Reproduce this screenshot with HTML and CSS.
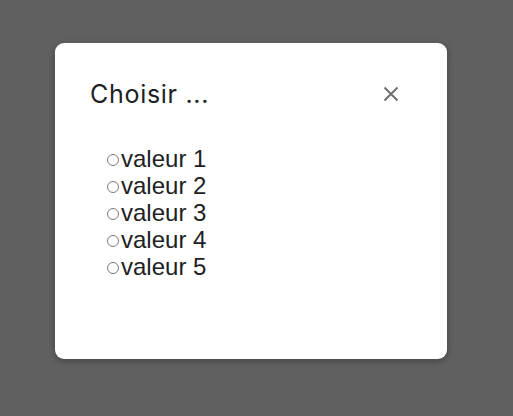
FILE: index.html
```html
<!DOCTYPE html>
<html lang="fr">
<head>
<meta charset="utf-8">
<title>Choisir</title>
<link rel="stylesheet" href="styles.css">
</head>
<body>
<div class="dialog" role="dialog" aria-labelledby="dlg-title">
  <div class="dialog-header">
    <h2 class="dialog-title" id="dlg-title">Choisir ...</h2>
    <button class="close-btn" type="button" aria-label="Fermer">
      <svg width="16" height="16" viewBox="0 0 16 16" aria-hidden="true">
        <path d="M1.5 1.5 L14.5 14.5 M14.5 1.5 L1.5 14.5" stroke="#6b6b6b" stroke-width="1.8" fill="none"/>
      </svg>
    </button>
  </div>
  <div class="dialog-body">
    <label class="option"><input type="radio" name="v" value="1"><span>valeur 1</span></label>
    <label class="option"><input type="radio" name="v" value="2"><span>valeur 2</span></label>
    <label class="option"><input type="radio" name="v" value="3"><span>valeur 3</span></label>
    <label class="option"><input type="radio" name="v" value="4"><span>valeur 4</span></label>
    <label class="option"><input type="radio" name="v" value="5"><span>valeur 5</span></label>
  </div>
</div>
</body>
</html>
```

FILE: styles.css
```css
html, body {
  margin: 0;
  height: 100%;
}
body {
  background: #606060;
  padding: 43px 0 0 55px;
  box-sizing: border-box;
}
.dialog {
  width: 392px;
  height: 316px;
  background: #fff;
  border-radius: 9px;
  box-shadow: 0 2px 6px rgba(0,0,0,0.3);
  box-sizing: border-box;
  padding: 35px 45px 0 35px;
}
.dialog-header {
  display: flex;
  align-items: center;
  justify-content: space-between;
}
.dialog-title {
  margin: 0;
  font-family: "Inter", "Noto Sans", sans-serif;
  font-weight: 400;
  font-size: 25px;
  letter-spacing: 0.7px;
  line-height: 32px;
  color: #202124;
}
.close-btn {
  border: 0;
  background: none;
  padding: 0;
  width: 22px;
  height: 22px;
  display: flex;
  align-items: center;
  justify-content: center;
  cursor: pointer;
}
.dialog-body {
  margin-top: 35px;
  padding-left: 17px;
  display: flex;
  flex-direction: column;
  font-family: "Liberation Sans", Arial, sans-serif;
  font-size: 24px;
  line-height: 27px;
  color: #202124;
}
.option {
  display: flex;
  align-items: center;
  gap: 2px;
  height: 27px;
}
.option input {
  appearance: none;
  -webkit-appearance: none;
  box-sizing: border-box;
  flex: 0 0 12px;
  width: 12px;
  height: 12px;
  border: 1px solid #7a7a7a;
  border-radius: 50%;
  background: #fff;
  margin: 2px 0 0 0;
}
```
